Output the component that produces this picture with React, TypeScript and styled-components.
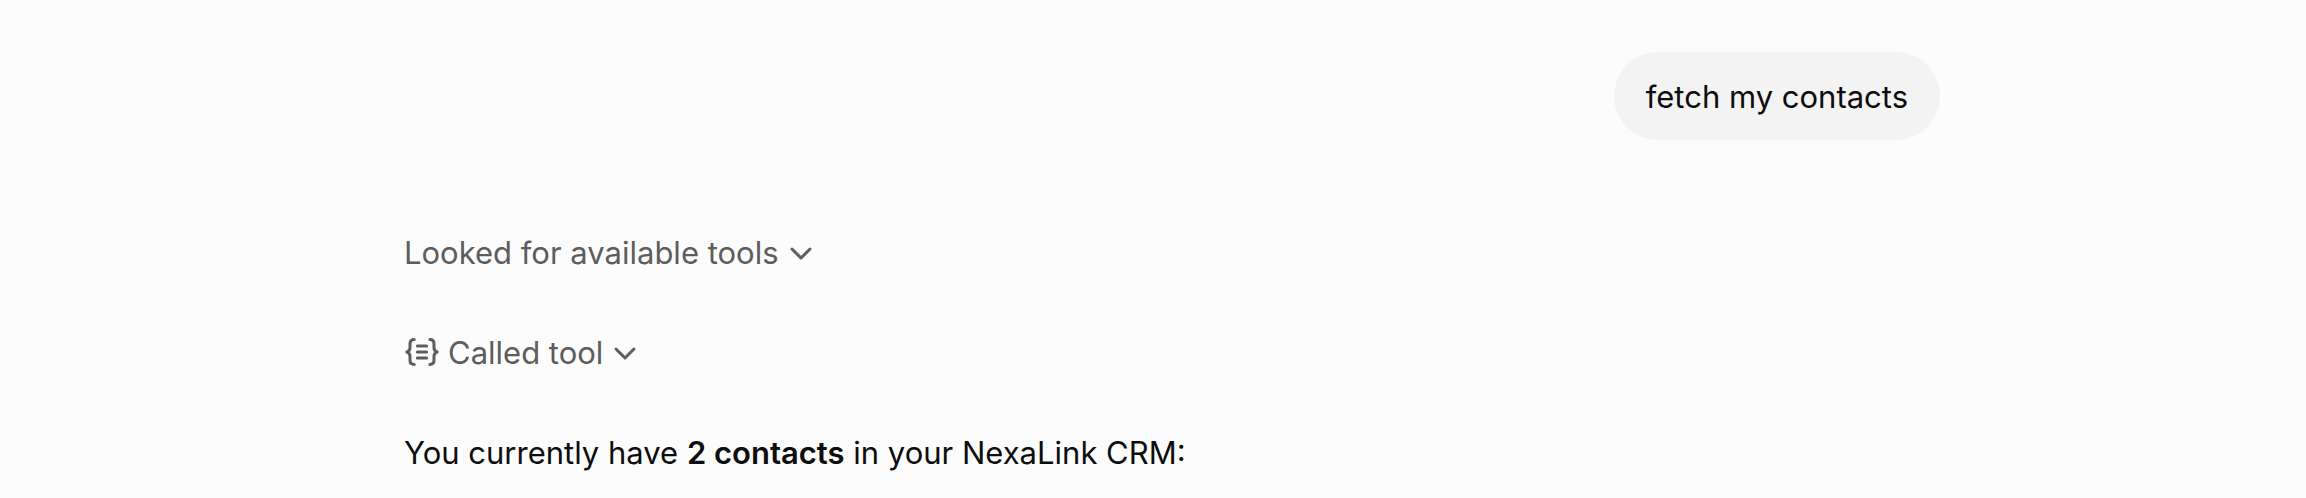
import React from "react";
import styled, { createGlobalStyle } from "styled-components";

const GlobalStyle = createGlobalStyle`
  *, *::before, *::after { box-sizing: border-box; }
  body {
    margin: 0;
    background: #fcfcfc;
    color: #0d0d0d;
    font-family: Inter, "Liberation Sans", sans-serif;
    font-size: 31px;
    font-weight: 400;
    line-height: 52px;
  }
`;

const Page = styled.main`
  padding: 52px 32px 8px 70px;
`;

const Thread = styled.div`
  display: flex;
  flex-direction: column;
  max-width: 1536px;
  margin: 0 auto;
`;

const UserMessage = styled.div`
  align-self: flex-end;
  padding: 19px 32px 17px;
  border-radius: 44px;
  background: #f3f3f3;
`;

const AssistantMessage = styled.section`
  display: flex;
  flex-direction: column;
  align-items: flex-start;
  gap: 48px;
  margin-top: 87px;
`;

const StepButton = styled.button`
  display: flex;
  align-items: center;
  padding: 0;
  border: 0;
  background: none;
  color: #5d5d5d;
  font: inherit;
  cursor: pointer;
`;

const StepLabel = styled.span<{ $afterIcon?: boolean }>`
  margin-left: ${(p) => (p.$afterIcon ? 8 : 0)}px;
  margin-right: 6px;
`;

const Reply = styled.p`
  margin: 0;

  strong { font-weight: 600; }
`;

const Icon = styled.svg`
  flex: none;
  fill: none;
  stroke: currentColor;
  stroke-linecap: round;
  stroke-linejoin: round;
`;

const ChevronIcon = () => (
  <Icon width="32" height="32" viewBox="0 0 32 32" strokeWidth="3" aria-hidden="true">
    <path d="M7 12l9 9 9-9" />
  </Icon>
);

const ToolIcon = () => (
  <Icon width="36" height="32" viewBox="0 0 36 32" strokeWidth="3" aria-hidden="true">
    <path d="M10.2 2.5C7.4 2.5 6 3.9 6 6.7v4c0 2.4-.9 3.5-3.2 4.300 2.300.8 3.200 1.900 3.200 4.300v4c0 2.800 1.400 4.200 4.200 4.200" />
    <path d="M25.800 2.500c2.800 0 4.200 1.400 4.200 4.200v4c0 2.400.9 3.500 3.200 4.300-2.300.8-3.200 1.900-3.200 4.300v4c0 2.800-1.400 4.200-4.200 4.200" />
    <path d="M13.400 9h9.200M13.400 15h9.200M13.400 21h9.200" />
  </Icon>
);

export default function App() {
  return (
    <>
      <GlobalStyle />
      <Page>
        <Thread>
          <UserMessage>fetch my contacts</UserMessage>
          <AssistantMessage>
            <StepButton type="button">
              <StepLabel>Looked for available tools</StepLabel>
              <ChevronIcon />
            </StepButton>
            <StepButton type="button">
              <ToolIcon />
              <StepLabel $afterIcon>Called tool</StepLabel>
              <ChevronIcon />
            </StepButton>
            <Reply>
              You currently have <strong>2 contacts</strong> in your NexaLink CRM:
            </Reply>
          </AssistantMessage>
        </Thread>
      </Page>
    </>
  );
}
